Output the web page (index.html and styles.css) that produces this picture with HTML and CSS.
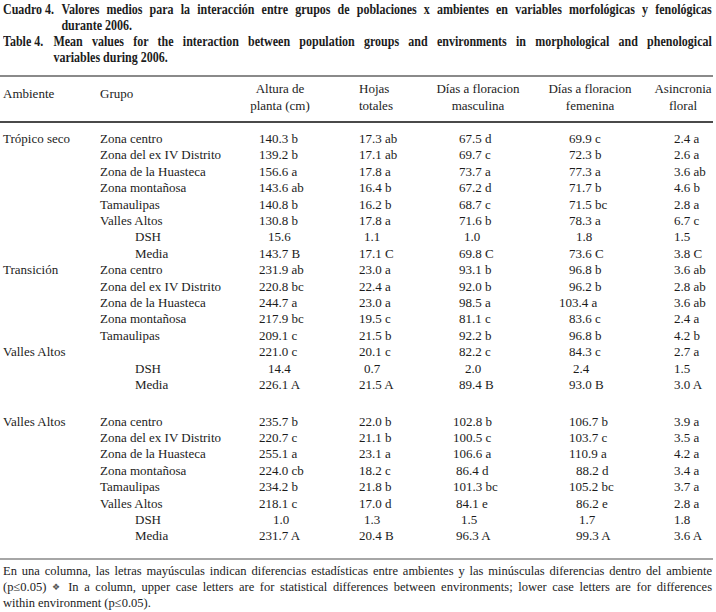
FILE: index.html
```html
<!DOCTYPE html>
<html lang="es">
<head>
<meta charset="utf-8">
<title>Cuadro 4</title>
<link rel="stylesheet" href="styles.css">
</head>
<body>
<div class="page">
  <div class="caption-box">
    <div class="caption">
      <div class="cap-line full"><span class="lbl lbl-es">Cuadro 4.</span>Valores medios para la interacción entre grupos de poblaciones x ambientes en variables morfológicas y fenológicas</div>
      <div class="cap-line cont-es">durante 2006.</div>
      <div class="cap-line full"><span class="lbl lbl-en">Table 4.</span>Mean values for the interaction between population groups and environments in morphological and phenological</div>
      <div class="cap-line cont-en">variables during 2006.</div>
    </div>
  </div>

  <table class="data">
    <colgroup>
      <col class="w-amb"><col class="w-grp"><col class="w-alt"><col class="w-hoj"><col class="w-mas"><col class="w-fem"><col class="w-asi">
    </colgroup>
    <thead>
      <tr>
        <th class="c-amb top">Ambiente</th>
        <th class="c-grp top">Grupo</th>
        <th class="c-alt">Altura de<br>planta (cm)</th>
        <th class="c-hoj">Hojas<br>totales</th>
        <th class="c-mas">Días a floracion<br>masculina</th>
        <th class="c-fem">Días a floracion<br>femenina</th>
        <th class="c-asi">Asincronia<br>floral</th>
      </tr>
    </thead>
    <tbody>
      <tr class="first"><td class="c-amb">Trópico seco</td><td class="c-grp">Zona centro</td><td class="c-alt">140.3 b</td><td class="c-hoj">17.3 ab</td><td class="c-mas">67.5 d</td><td class="c-fem">69.9 c</td><td class="c-asi">2.4 a</td></tr>
      <tr><td class="c-amb"></td><td class="c-grp">Zona del ex IV Distrito</td><td class="c-alt">139.2 b</td><td class="c-hoj">17.1 ab</td><td class="c-mas">69.7 c</td><td class="c-fem">72.3 b</td><td class="c-asi">2.6 a</td></tr>
      <tr><td class="c-amb"></td><td class="c-grp">Zona de la Huasteca</td><td class="c-alt">156.6 a</td><td class="c-hoj">17.8 a</td><td class="c-mas">73.7 a</td><td class="c-fem">77.3 a</td><td class="c-asi">3.6 ab</td></tr>
      <tr><td class="c-amb"></td><td class="c-grp">Zona montañosa</td><td class="c-alt">143.6 ab</td><td class="c-hoj">16.4 b</td><td class="c-mas">67.2 d</td><td class="c-fem">71.7 b</td><td class="c-asi">4.6 b</td></tr>
      <tr><td class="c-amb"></td><td class="c-grp">Tamaulipas</td><td class="c-alt">140.8 b</td><td class="c-hoj">16.2 b</td><td class="c-mas">68.7 c</td><td class="c-fem">71.5 bc</td><td class="c-asi">2.8 a</td></tr>
      <tr><td class="c-amb"></td><td class="c-grp">Valles Altos</td><td class="c-alt">130.8 b</td><td class="c-hoj">17.8 a</td><td class="c-mas">71.6 b</td><td class="c-fem">78.3 a</td><td class="c-asi">6.7 c</td></tr>
      <tr><td class="c-amb"></td><td class="c-grp sub">DSH</td><td class="c-alt t9">15.6</td><td class="c-hoj t5">1.1</td><td class="c-mas t5">1.0</td><td class="c-fem t7">1.8</td><td class="c-asi">1.5</td></tr>
      <tr><td class="c-amb"></td><td class="c-grp sub">Media</td><td class="c-alt">143.7 B</td><td class="c-hoj">17.1 C</td><td class="c-mas">69.8 C</td><td class="c-fem">73.6 C</td><td class="c-asi">3.8 C</td></tr>

      <tr><td class="c-amb">Transición</td><td class="c-grp">Zona centro</td><td class="c-alt">231.9 ab</td><td class="c-hoj">23.0 a</td><td class="c-mas">93.1 b</td><td class="c-fem">96.8 b</td><td class="c-asi">3.6 ab</td></tr>
      <tr><td class="c-amb"></td><td class="c-grp">Zona del ex IV Distrito</td><td class="c-alt">220.8 bc</td><td class="c-hoj">22.4 a</td><td class="c-mas">92.0 b</td><td class="c-fem">96.2 b</td><td class="c-asi">2.8 ab</td></tr>
      <tr><td class="c-amb"></td><td class="c-grp">Zona de la Huasteca</td><td class="c-alt">244.7 a</td><td class="c-hoj">23.0 a</td><td class="c-mas">98.5 a</td><td class="c-fem n10">103.4 a</td><td class="c-asi">3.6 ab</td></tr>
      <tr><td class="c-amb"></td><td class="c-grp">Zona montañosa</td><td class="c-alt">217.9 bc</td><td class="c-hoj">19.5 c</td><td class="c-mas">81.1 c</td><td class="c-fem">83.6 c</td><td class="c-asi">2.4 a</td></tr>
      <tr><td class="c-amb"></td><td class="c-grp">Tamaulipas</td><td class="c-alt">209.1 c</td><td class="c-hoj">21.5 b</td><td class="c-mas">92.2 b</td><td class="c-fem">96.8 b</td><td class="c-asi">4.2 b</td></tr>
      <tr><td class="c-amb">Valles Altos</td><td class="c-grp"></td><td class="c-alt">221.0 c</td><td class="c-hoj">20.1 c</td><td class="c-mas">82.2 c</td><td class="c-fem">84.3 c</td><td class="c-asi">2.7 a</td></tr>
      <tr><td class="c-amb"></td><td class="c-grp sub">DSH</td><td class="c-alt t9">14.4</td><td class="c-hoj t5">0.7</td><td class="c-mas t6">2.0</td><td class="c-fem t4">2.4</td><td class="c-asi">1.5</td></tr>
      <tr><td class="c-amb"></td><td class="c-grp sub">Media</td><td class="c-alt">226.1 A</td><td class="c-hoj">21.5 A</td><td class="c-mas">89.4 B</td><td class="c-fem">93.0 B</td><td class="c-asi">3.0 A</td></tr>

      <tr class="gap"><td class="c-amb">Valles Altos</td><td class="c-grp">Zona centro</td><td class="c-alt">235.7 b</td><td class="c-hoj">22.0 b</td><td class="c-mas n6">102.8 b</td><td class="c-fem">106.7 b</td><td class="c-asi">3.9 a</td></tr>
      <tr><td class="c-amb"></td><td class="c-grp">Zona del ex IV Distrito</td><td class="c-alt">220.7 c</td><td class="c-hoj">21.1 b</td><td class="c-mas n6">100.5 c</td><td class="c-fem">103.7 c</td><td class="c-asi">3.5 a</td></tr>
      <tr><td class="c-amb"></td><td class="c-grp">Zona de la Huasteca</td><td class="c-alt">255.1 a</td><td class="c-hoj">23.1 a</td><td class="c-mas n6">106.6 a</td><td class="c-fem">110.9 a</td><td class="c-asi">4.2 a</td></tr>
      <tr><td class="c-amb"></td><td class="c-grp">Zona montañosa</td><td class="c-alt">224.0 cb</td><td class="c-hoj">18.2 c</td><td class="c-mas n3">86.4 d</td><td class="c-fem t7">88.2 d</td><td class="c-asi">3.4 a</td></tr>
      <tr><td class="c-amb"></td><td class="c-grp">Tamaulipas</td><td class="c-alt">234.2 b</td><td class="c-hoj">21.8 b</td><td class="c-mas n6">101.3 bc</td><td class="c-fem">105.2 bc</td><td class="c-asi">3.7 a</td></tr>
      <tr><td class="c-amb"></td><td class="c-grp">Valles Altos</td><td class="c-alt">218.1 c</td><td class="c-hoj">17.0 d</td><td class="c-mas n3">84.1 e</td><td class="c-fem t7">86.2 e</td><td class="c-asi">2.8 a</td></tr>
      <tr><td class="c-amb"></td><td class="c-grp sub">DSH</td><td class="c-alt t14">1.0</td><td class="c-hoj t5">1.3</td><td class="c-mas t2">1.5</td><td class="c-fem t10">1.7</td><td class="c-asi">1.8</td></tr>
      <tr class="last"><td class="c-amb"></td><td class="c-grp sub">Media</td><td class="c-alt">231.7 A</td><td class="c-hoj">20.4 B</td><td class="c-mas n3">96.3 A</td><td class="c-fem t7">99.3 A</td><td class="c-asi">3.6 A</td></tr>
    </tbody>
  </table>

  <div class="note">
    <div class="note-line full">En una columna, las letras mayúsculas indican diferencias estadísticas entre ambientes y las minúsculas diferencias dentro del ambiente</div>
    <div class="note-line full">(p≤0.05) <span class="orn">❖</span> In a column, upper case letters are for statistical differences between environments; lower case letters are for differences</div>
    <div class="note-line">within environment (p≤0.05).</div>
  </div>
</div>
</body>
</html>
```

FILE: styles.css
```css
html, body {
  margin: 0;
  padding: 0;
  background: #ffffff;
}

body {
  color: #1c1c1c;
  font-family: "Liberation Serif", "Times New Roman", serif;
  font-size: 13px;
}

.page {
  width: 713px;
}

/* ---------- caption (bold condensed face, emulated by a horizontal squeeze) ---------- */
.caption-box {
  overflow: hidden;
  padding: 1px 0 0 3px;
}

.caption {
  width: 886px;
  transform: scaleX(0.8);
  transform-origin: 0 0;
  font-weight: bold;
  font-size: 15px;
  line-height: 16px;
}

.cap-line.full {
  text-align: justify;
  text-align-last: justify;
}

.lbl {
  display: inline-block;
  white-space: nowrap;
  text-align: left;
  text-align-last: left;
}

.lbl-es { width: 73px; }
.lbl-en { width: 63px; }

.cont-es { padding-left: 73px; }
.cont-en { padding-left: 63px; }

/* ---------- table ---------- */
.data {
  margin-top: 10px;
  width: 713px;
  table-layout: fixed;
  border-collapse: collapse;
  border-spacing: 0;
}

.w-amb { width: 100px; }
.w-grp { width: 130px; }
.w-alt { width: 100px; }
.w-hoj { width: 90px; }
.w-mas { width: 116px; }
.w-fem { width: 108px; }
.w-asi { width: 69px; }

.data th {
  font-weight: normal;
  line-height: 16.5px;
  padding: 4px 0 7px 0;
  vertical-align: top;
  border-top: 2px solid #8a8a8a;
  border-bottom: 2px solid #4a4a4a;
  white-space: nowrap;
}

.data th.top {
  padding-top: 9px;
  text-align: left;
}

.data td {
  line-height: 16.4px;
  padding: 0;
  white-space: nowrap;
  text-align: left;
  vertical-align: top;
}

.data tr.first td { padding-top: 8px; }
.data tr.gap td { padding-top: 20px; }
.data tr.last td {
  padding-bottom: 13px;
  border-bottom: 2px solid #a6a6a6;
}

th.c-amb, td.c-amb { padding-left: 3px; }
th.c-grp, td.c-grp { padding-left: 0; }
td.c-grp.sub { padding-left: 35px; }

th.c-alt { text-align: center; }
td.c-alt { padding-left: 29px; }

th.c-hoj { text-align: left; padding-left: 29px; }
td.c-hoj { padding-left: 29px; }

th.c-mas { text-align: center; }
td.c-mas { padding-left: 39px; }

th.c-fem { text-align: center; }
td.c-fem { padding-left: 33px; }

th.c-asi { text-align: center; padding-left: 9px; }
td.c-asi { padding-left: 30px; }

/* fine horizontal alignment of figures, as typeset */
.t2 { text-indent: 2px; }
.t4 { text-indent: 4px; }
.t5 { text-indent: 5px; }
.t6 { text-indent: 6px; }
.t7 { text-indent: 7px; }
.t9 { text-indent: 9px; }
.t10 { text-indent: 10px; }
.t14 { text-indent: 14px; }
.n3 { text-indent: -3px; }
.n6 { text-indent: -6px; }
.n10 { text-indent: -10px; }

/* ---------- footnote ---------- */
.note {
  padding: 3px 1px 0 3px;
  font-size: 12.5px;
  line-height: 16px;
}

.note-line.full {
  text-align: justify;
  text-align-last: justify;
}

.orn {
  font-family: "DejaVu Sans", sans-serif;
  font-size: 9px;
  color: #555;
  vertical-align: 1px;
}
```
